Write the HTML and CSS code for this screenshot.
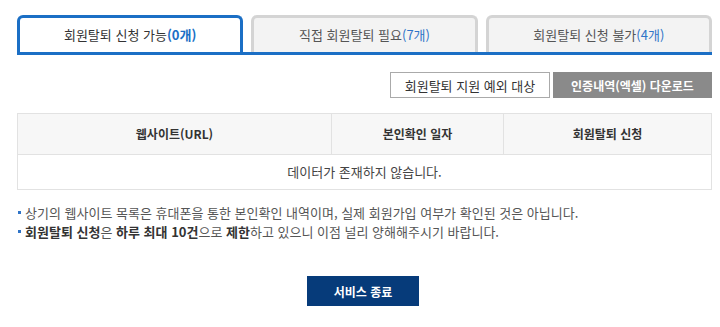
FILE: index.html
```html
<!DOCTYPE html>
<html lang="ko">
<head>
  <meta charset="UTF-8" />
  <meta name="viewport" content="width=device-width, initial-scale=1.0" />
  <title>회원탈퇴</title>
  <link rel="stylesheet" href="styles.css">
</head>
<body>
  <div class="wrap">
    <ul class="tabs">
      <li class="tab on">회원탈퇴 신청 가능<span class="cnt">(0개)</span></li>
      <li class="tab">직접 회원탈퇴 필요<span class="cnt">(7개)</span></li>
      <li class="tab">회원탈퇴 신청 불가<span class="cnt">(4개)</span></li>
    </ul>

    <div class="btns">
      <button class="btn-line">회원탈퇴 지원 예외 대상</button>
      <button class="btn-gray">인증내역(엑셀) 다운로드</button>
    </div>

    <table class="list">
      <colgroup>
        <col class="c-url">
        <col class="c-date">
        <col>
      </colgroup>
      <thead>
        <tr>
          <th>웹사이트(URL)</th>
          <th>본인확인 일자</th>
          <th>회원탈퇴 신청</th>
        </tr>
      </thead>
      <tbody>
        <tr>
          <td colspan="3">데이터가 존재하지 않습니다.</td>
        </tr>
      </tbody>
    </table>

    <ul class="notes">
      <li>상기의 웹사이트 목록은 휴대폰을 통한 본인확인 내역이며, 실제 회원가입 여부가 확인된 것은 아닙니다.</li>
      <li><b>회원탈퇴 신청</b>은 <b>하루 최대 10건</b>으로 <b>제한</b>하고 있으니 이점 널리 양해해주시기 바랍니다.</li>
    </ul>

    <div class="bottom">
      <button class="btn-navy">서비스 종료</button>
    </div>
  </div>
</body>
</html>
```

FILE: styles.css
```css
body {
  margin: 0;
  padding: 0;
  background: #fff;
  font-family: "Noto Sans CJK KR", "Noto Sans", sans-serif;
  color: #333;
}
.wrap {
  width: 695px;
  margin-left: 17px;
  padding-top: 15px;
}
.tabs {
  list-style: none;
  margin: 0;
  padding: 0;
  display: flex;
  gap: 8px;
  border-bottom: 3px solid #1b6fc5;
}
.tab {
  flex: 1;
  height: 34px;
  line-height: 34px;
  text-align: center;
  font-size: 13px;
  color: #555;
  background: #f3f3f3;
  border: 3px solid #d4d4d4;
  border-bottom: none;
  border-radius: 6px 6px 0 0;
}
.tab .cnt {
  color: #2f74c8;
}
.tab.on {
  background: #fff;
  border-color: #1b6fc5;
  color: #333;
}
.tab.on .cnt {
  font-weight: bold;
  color: #1b6fc5;
}
.btns {
  display: flex;
  justify-content: flex-end;
  gap: 3px;
  margin-top: 17px;
}
.btns button {
  height: 26px;
  font-family: inherit;
  padding: 0;
  cursor: pointer;
}
.btn-line {
  width: 160px;
  background: #fff;
  border: 1px solid #aaa;
  color: #333;
  font-size: 13px;
}
.btn-gray {
  width: 159px;
  background: #8a8a8a;
  border: 1px solid #8a8a8a;
  color: #fff;
  font-size: 12px;
  font-weight: bold;
}
.list {
  width: 100%;
  margin-top: 15px;
  border-collapse: collapse;
  table-layout: fixed;
  font-size: 12px;
}
.c-url {
  width: 314px;
}
.c-date {
  width: 172px;
}
.list th,
.list td {
  border: 1px solid #e2e2e2;
  text-align: center;
  padding: 0;
  line-height: 18px;
}
.list th {
  height: 40px;
  background: #f7f7f7;
  font-weight: bold;
  color: #333;
}
.list td {
  height: 34px;
  font-size: 13px;
  color: #444;
}
.notes {
  list-style: none;
  margin: 13px 0 0;
  padding: 0;
  font-size: 13px;
  color: #555;
  line-height: 19px;
}
.notes li {
  position: relative;
  padding-left: 8px;
}
.notes li::before {
  content: "";
  position: absolute;
  left: 1px;
  top: 8px;
  width: 3px;
  height: 3px;
  background: #2f74c8;
}
.notes b {
  color: #333;
}
.bottom {
  display: flex;
  justify-content: center;
  margin-top: 35px;
  padding-right: 3px;
}
.btn-navy {
  width: 112px;
  height: 30px;
  background: #063b7a;
  border: 1px solid #063b7a;
  color: #fff;
  font-family: inherit;
  font-size: 12px;
  font-weight: bold;
  cursor: pointer;
}
```
